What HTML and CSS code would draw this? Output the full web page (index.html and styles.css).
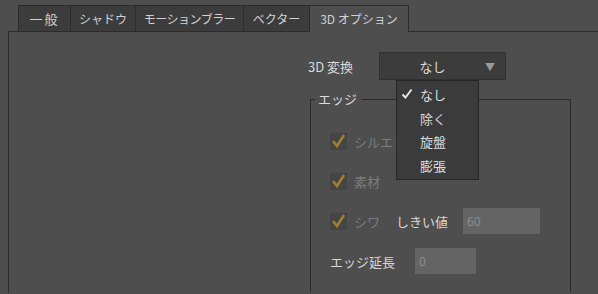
FILE: index.html
```html
<!DOCTYPE html>
<html lang="ja">
<head>
  <meta charset="UTF-8" />
  <title>3D オプション</title>
  <link rel="stylesheet" href="styles.css">
</head>
<body>

  <ul class="tabs">
    <li class="tab tab-general">一般</li>
    <li class="tab tab-shadow">シャドウ</li>
    <li class="tab tab-blur">モーションブラー</li>
    <li class="tab tab-vector">ベクター</li>
    <li class="tab tab-3d active">3D オプション</li>
  </ul>

  <div class="panel">
    <div class="column">

      <div class="field-row">
        <label class="field-label">3D 変換</label>
        <div class="select-wrap">
          <div class="select">
            <span class="select-value">なし</span>
            <span class="select-arrow">▼</span>
          </div>
          <ul class="dropdown">
            <li class="selected">
              <svg class="tick" viewBox="0 0 12 12" width="12" height="12"><path d="M1.5 6.5 L4.5 9.5 L10.5 1.5" fill="none" stroke="#e6e6e6" stroke-width="2"/></svg>
              なし
            </li>
            <li>除く</li>
            <li>旋盤</li>
            <li>膨張</li>
          </ul>
        </div>
      </div>

      <div class="group">
        <span class="group-title">エッジ</span>

        <div class="row">
          <span class="check"><svg viewBox="0 0 17 17" width="17" height="17"><path d="M3 8 L7 13 L14 2" fill="none" stroke="#a07e30" stroke-width="2.6"/></svg></span>
          <span class="dim">シルエット</span>
        </div>

        <div class="row">
          <span class="check"><svg viewBox="0 0 17 17" width="17" height="17"><path d="M3 8 L7 13 L14 2" fill="none" stroke="#a07e30" stroke-width="2.6"/></svg></span>
          <span class="dim">素材</span>
        </div>

        <div class="row">
          <span class="check"><svg viewBox="0 0 17 17" width="17" height="17"><path d="M3 8 L7 13 L14 2" fill="none" stroke="#a07e30" stroke-width="2.6"/></svg></span>
          <span class="dim crease">シワ</span>
          <span class="light threshold">しきい値</span>
          <input class="num wide" type="text" value="60" disabled>
        </div>

        <div class="row">
          <span class="light extend">エッジ延長</span>
          <input class="num" type="text" value="0" disabled>
        </div>
      </div>

    </div>
  </div>

</body>
</html>
```

FILE: styles.css
```css
body {
  margin: 0;
  padding: 0;
  background-color: #4e4e4e;
  color: #d6d6d6;
  font-family: "Noto Sans CJK JP", "Noto Sans", sans-serif;
  font-size: 13px;
  height: 294px;
  overflow: hidden;
}

.tabs {
  display: flex;
  list-style: none;
  margin: 0;
  padding: 5px 0 0 18px;
}

.tab {
  height: 26px;
  line-height: 25px;
  box-sizing: border-box;
  text-align: center;
  font-size: 12px;
  background-color: #3c3c3c;
  border: 1px solid #2c2c2c;
  border-bottom: none;
  border-right: none;
  color: #d2d2d2;
}

.tab-general { width: 52px; font-size: 13px; letter-spacing: 2px; }
.tab-shadow { width: 65px; }
.tab-blur { width: 108px; letter-spacing: -0.5px; }
.tab-vector { width: 66px; }
.tab-3d { width: 100px; }

.tab.active {
  background-color: #4e4e4e;
  border-right: 1px solid #2c2c2c;
  margin-bottom: -1px;
  height: 27px;
  position: relative;
}

.panel {
  margin-left: 8px;
  border-top: 1px solid #2c2c2c;
  border-left: 1px solid #2c2c2c;
  height: 261px;
}

.column {
  margin-left: 301px;
  width: 261px;
}

.field-row {
  display: flex;
  align-items: center;
  margin-top: 20px;
  height: 28px;
}

.field-label {
  width: 71px;
  margin-left: -2px;
  color: #dadada;
}

.select-wrap {
  position: relative;
}

.select {
  width: 125px;
  height: 26px;
  background-color: #3c3c3c;
  border: 1px solid #303030;
  display: flex;
  align-items: center;
}

.select-value {
  flex: 1;
  text-align: center;
  color: #dcdcdc;
}

.select-arrow {
  color: #9a9a9a;
  font-size: 10px;
  width: 20px;
}

.dropdown {
  position: absolute;
  top: 28px;
  left: 17px;
  width: 81px;
  height: 96px;
  margin: 0;
  padding: 2px 0 0 0;
  list-style: none;
  background-color: #3b3b3b;
  border: 1px solid #262626;
  z-index: 2;
}

.dropdown li {
  height: 23.5px;
  line-height: 23px;
  padding-left: 23px;
  position: relative;
  color: #dcdcdc;
}

.dropdown .tick {
  position: absolute;
  left: 4px;
  top: 5px;
}

.group {
  position: relative;
  margin-top: 19px;
  border: 1px solid #2a2a2a;
  border-bottom: none;
  height: 193px;
  box-sizing: border-box;
  padding: 28px 0 0 19px;
}

.group-title {
  position: absolute;
  top: -11px;
  left: 4px;
  padding: 0 5px 0 3px;
  background-color: #4e4e4e;
  color: #dadada;
  line-height: 20px;
}

.row {
  display: flex;
  align-items: center;
  height: 26px;
  margin-bottom: 14px;
}

.check {
  width: 17px;
  height: 17px;
  background-color: #454545;
  margin-right: 7px;
}

.check svg {
  display: block;
}

.dim {
  color: #7c7c7c;
}

.light {
  color: #d6d6d6;
}

.crease {
  width: 42px;
}

.threshold {
  width: 67px;
}

.extend {
  width: 85px;
}

.num {
  height: 26px;
  box-sizing: border-box;
  border: none;
  background-color: #646464;
  color: #8c8c8c;
  font-family: "Noto Sans", sans-serif;
  font-size: 12px;
  padding: 0 4px;
  width: 61px;
}

.num.wide {
  width: 77px;
}
```
